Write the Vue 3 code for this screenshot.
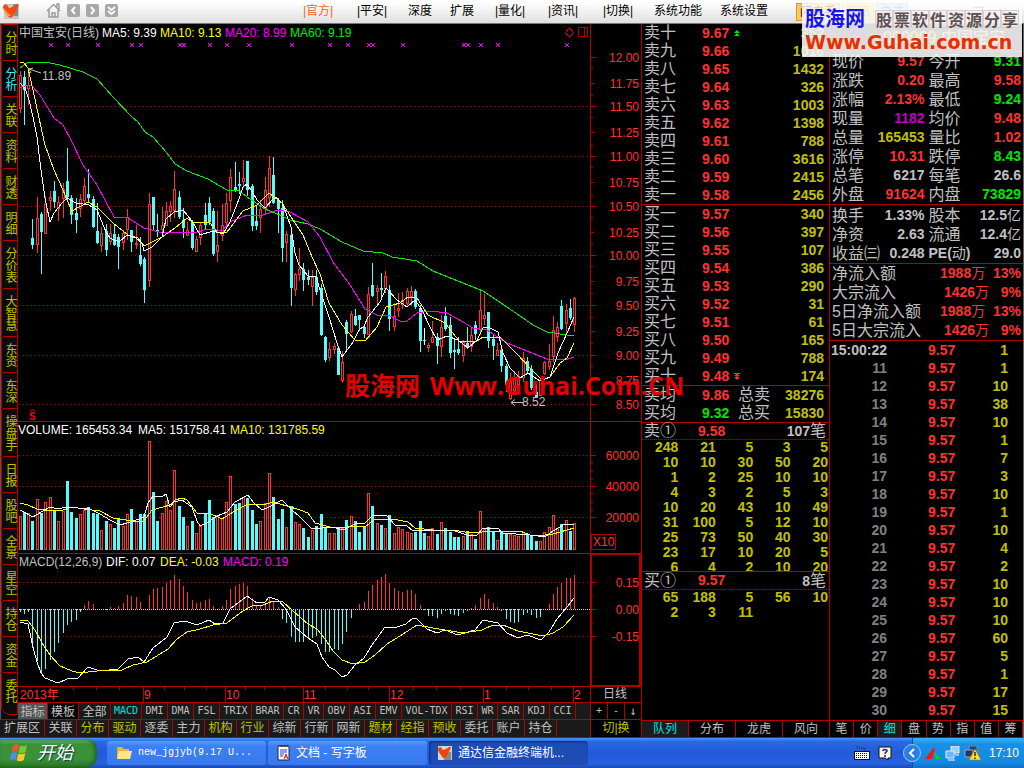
<script setup>
const menus = [
  { t: '|官方|', w: 54, hot: true },
  { t: '|平安|', w: 51 },
  { t: '深度', w: 42 },
  { t: '扩展', w: 45 },
  { t: '|量化|', w: 53 },
  { t: '|资讯|', w: 55 },
  { t: '|切换|', w: 51 },
  { t: '系统功能', w: 66 },
  { t: '系统设置', w: 76 },
]

const sideTabs = ['分时', '分析', '关联', '资料', '财透', '明细', '分价表', '大智慧', '东资', '东深', '操盘手', '日报', '股吧', '全景', '星空', '持仓', '资金', '委托']

// colour, high, low, body top, body bottom, volume top
const candleText = `r 71 113 75 108 516;c 71 125 77 90 512;r 70 105 85 88 513;c 219 249 238 245 521;r 197 253 218 244 499;c 212 274 214 232 513;r 196 233 204 233 502;r 191 211 197 200 497;c 181 208 191 202 511;r 196 221 202 208 521;
r 183 218 189 198 511;c 148 200 181 197 481;c 195 224 198 215 512;c 198 233 213 220 518;r 194 217 199 208 514;r 178 204 186 200 510;c 169 203 194 198 507;c 196 228 199 227 513;c 203 244 231 243 514;r 227 252 233 245 530;
c 224 256 231 250 521;r 224 245 233 241 524;c 225 246 234 245 528;c 234 269 237 247 519;r 230 250 233 242 526;r 209 240 217 229 514;c 230 252 230 242 509;r 225 249 243 244 521;c 237 266 255 264 514;c 257 303 259 290 514;
r 193 287 204 280 441;c 197 230 197 225 492;c 214 237 230 232 521;r 207 236 225 229 513;r 202 226 211 225 501;r 201 222 206 211 510;r 171 218 189 210 470;c 191 219 197 217 506;c 208 238 220 228 517;r 222 235 230 235 526;
c 220 250 222 248 521;r 236 251 239 251 533;r 222 245 225 237 526;c 203 230 215 225 514;c 197 225 203 222 500;c 208 256 211 254 517;r 211 262 245 251 515;r 204 241 225 235 518;r 193 225 203 222 502;r 169 212 177 200 476;
c 162 192 187 190 504;c 172 194 184 186 503;r 160 188 178 181 497;c 161 196 161 190 498;c 184 231 186 226 510;c 206 230 221 226 524;r 200 233 209 217 521;r 177 215 190 208 503;r 156 207 168 197 473;c 157 204 175 203 497;
c 198 233 200 209 519;c 200 262 208 248 509;r 231 262 234 242 527;c 229 306 235 288 506;r 273 296 274 289 522;r 248 281 269 274 524;c 263 291 269 280 528;c 270 285 277 280 537;r 270 306 277 286 530;c 270 295 277 292 526;
c 284 336 288 335 514;c 336 362 337 360 527;r 342 361 349 357 533;r 343 354 346 349 533;c 346 375 348 375 528;r 351 383 362 380 528;c 320 351 322 334 520;r 311 333 314 331 516;c 309 326 316 325 521;c 315 331 315 320 532;
c 324 338 327 334 527;r 287 335 294 334 493;c 263 297 285 296 506;r 285 306 288 291 523;c 273 298 288 290 525;r 271 293 276 288 528;c 285 331 290 319 515;r 303 331 316 326 533;r 293 317 308 310 527;r 292 309 300 304 529;
r 288 306 291 303 532;r 286 306 291 296 533;c 289 309 291 307 532;c 305 352 308 341 521;w 328 345 340 341 533;r 343 352 345 347 536;r 321 343 337 342 528;c 333 364 337 346 534;r 315 357 327 346 522;c 307 331 316 329 528;
c 317 358 325 353 532;c 338 369 350 352 537;c 337 355 349 353 537;r 340 362 342 355 536;c 327 349 343 348 531;r 328 352 335 346 534;c 321 340 325 334 539;r 291 335 310 329 511;r 294 325 315 318 529;c 312 348 312 341 527;
c 335 360 339 346 531;r 343 355 350 355 540;c 345 372 350 366 532;c 364 392 366 385 533;r 373 400 380 398 534;r 371 392 378 390 535;r 371 386 376 384 536;r 352 382 358 377 532;c 357 373 361 371 534;c 365 390 369 388 535;
c 385 397 392 397 541;r 378 396 380 395 541;r 361 375 362 373 532;r 344 370 361 366 527;r 316 362 330 356 515;r 322 342 327 336 528;c 300 330 306 329 524;r 304 333 310 323 520;c 299 320 308 318 531;r 297 332 298 324 523`

const candles = candleText.split(';').map((row, i) => {
  const [k, ...n] = row.trim().split(' ')
  const [hi, lo, top, bot, vol] = n.map(Number)
  return { k, hi, lo, top, bot, vol, x: 20 + Math.floor(4.3 * i + 0.1) }
})

const macd = [-3, -5, -3, -39, -52, -64, -60, -51, -43, -34, -24, -16, -13, -11, -3, 4, 8, 5, 0, 0, -1, 2, 1, 3, 6, 14, 13, 12, 7, 0, 14, 20, 21, 22, 26, 29, 34, 30, 23, 17, 9, 6, 7, 9, 10, 3, 0, 3, 9, 20, 23, 25, 26, 23, 11, 4, 3, 6, 12, 8, 2, -10, -14, -28, -33, -33, -33, -30, -29, -27, -35, -43, -43, -40, -41, -35, -23, -9, 0, 5, 7, 18, 24, 29, 32, 35, 26, 21, 18, 17, 19, 19, 15, 4, -1, -7, -7, -9, -5, -2, -5, -6, -7, -4, -2, 1, 4, 11, 15, 10, 6, 2, -2, -10, -13, -14, -13, -6, -4, -6, -9, -8, 0, 5, 15, 22, 26, 31, 31, 34]
  .map((v, i) => ({ v, x: 20 + Math.floor(4.3 * i + 0.1) }))

const lines = [
  { c: '#00f000', p: '20,68 27,63 45,62 60,65 83,72 97,79 113,97 132,117 138,122 145,132 153,137 167,153 175,164 187,171 208,179 227,190 239,191 250,199 265,209 280,215 290,220 308,224 320,229 342,242 363,251 383,253 392,257 417,261 433,271 453,279 483,291 507,307 533,325 547,332 567,335 574,336' },
  { c: '#f0f', p: '20,88 27,85 32,86 40,95 49,110 54,118 63,125 71,140 83,165 97,185 105,200 114,217 128,218 144,228 163,233 197,232 208,229 222,231 230,222 247,215 263,215 278,210 290,212 308,222 320,237 333,262 350,285 365,309 377,315 390,316 400,321 407,321 417,313 430,311 447,313 463,322 473,328 487,330 507,343 527,351 547,359 568,359 574,357' },
  { c: '#ff0', p: '20,62 23,62 28,68 33,90 41,127 45,145 54,170 63,190 67,200 72,211 88,202 97,207 113,223 128,235 138,238 144,246 162,237 175,228 187,218 192,222 210,223 218,233 227,232 243,211 257,205 269,193 278,200 282,203 293,220 303,235 312,257 320,274 329,303 342,325 355,340 365,341 377,327 386,307 400,303 408,297 417,298 428,315 445,323 460,342 477,341 483,337 500,337 517,354 530,368 542,380 550,377 560,363 567,358 574,343' },
  { c: '#fff', p: '20,83 25,88 29,100 33,117 37,137 41,170 45,198 50,222 54,213 62,203 67,198 76,203 89,205 97,210 106,232 110,238 119,242 127,235 136,238 142,243 144,251 152,247 162,237 166,219 174,212 183,210 192,221 200,235 213,231 223,234 230,222 239,199 243,187 247,184 253,193 257,200 265,208 273,199 276,197 282,203 286,213 291,227 295,253 299,265 308,276 316,277 321,293 329,317 337,343 342,357 353,342 359,330 364,326 368,317 380,302 386,288 397,300 407,307 415,300 422,310 430,327 437,340 447,336 458,340 468,348 477,340 483,328 488,327 498,332 503,353 510,368 520,378 528,373 540,381 550,377 558,353 567,333 574,317' },
  { c: '#ff0', p: '20,503 28,505 37,509 50,511 63,510 71,507 84,509 100,511 113,518 133,521 144,521 152,510 163,507 170,505 175,500 182,498 187,500 197,513 209,513 222,519 233,512 248,504 263,505 273,502 287,506 300,510 308,513 315,523 330,527 343,528 353,526 365,527 375,519 393,519 408,522 415,528 433,530 453,530 465,532 477,533 487,531 520,531 530,535 545,535 553,534 574,528' },
  { c: '#fff', p: '20,510 33,517 41,512 50,507 58,509 67,507 78,508 88,508 100,514 110,520 120,525 127,523 136,520 144,517 148,503 153,496 163,496 166,494 170,507 174,502 182,500 192,507 197,521 200,526 207,523 217,516 227,512 235,502 248,495 253,502 262,510 269,507 282,500 292,510 300,517 312,529 333,527 343,530 355,524 365,523 372,516 386,515 395,525 407,526 413,531 420,530 433,531 452,530 467,535 477,535 482,529 498,528 502,533 530,535 545,537 553,531 565,524 574,524' },
  { c: '#fff', p: '20,622 28,624 33,647 37,662 41,673 45,678 58,683 67,679 78,678 88,667 100,671 118,669 128,659 138,657 144,662 153,648 167,637 174,623 185,621 197,625 209,620 215,624 223,623 230,609 247,596 257,603 265,602 269,597 278,600 286,609 295,627 308,638 317,644 322,657 329,667 335,670 342,677 347,675 355,665 364,658 372,645 385,627 397,627 406,624 413,618 417,619 427,629 437,633 445,630 458,635 475,630 483,620 498,623 507,633 518,638 527,635 541,640 549,632 557,619 567,607 574,598' },
  { c: '#ff0', p: '20,620 28,621 35,630 42,643 50,655 60,666 72,671 80,673 97,671 122,670 133,665 147,662 160,654 168,649 177,639 187,632 200,629 213,625 227,623 243,611 252,606 263,605 273,601 283,602 293,611 308,624 317,629 325,639 333,651 342,660 353,664 365,662 375,655 387,644 400,636 417,625 433,628 463,633 482,630 493,625 503,625 518,631 543,636 553,633 563,627 574,615' },
]

const priceAxis = [[12, 57], [11.75, 83], [11.5, 106], [11.25, 132], [11, 156], [10.75, 182], [10.5, 206], [10.25, 232], [10, 255], [9.75, 281], [9.5, 305], [9.25, 331], [9, 355], [8.75, 380], [8.5, 404]]
  .map(([v, y]) => ({ t: v.toFixed(2), y, major: v % 0.5 === 0 }))
const otherAxis = [['60000', 455], ['40000', 486], ['20000', 517], ['0.15', 582], ['0.00', 609], ['-0.15', 636]]
const gridY = [106, 156, 206, 255, 305, 355, 404, 455, 486, 517, 582, 636]
const minorTicks = [68, 95, 117, 145, 167, 195, 217, 244, 266, 293, 317, 343, 366, 392, 462, 471, 479, 493, 502, 510, 596, 623]
const signals = [51, 68, 98, 132, 141, 180, 184, 210, 227, 249, 292, 330, 348, 369, 373, 403, 464, 468, 481, 498, 567]
const months = [['9', 143], ['10', 225], ['11', 303], ['12', 389], ['1', 483], ['2', 573]]
const weekTicks = [73, 96, 119, 164, 184, 206, 245, 264, 284, 325, 347, 368, 413, 436, 460, 506, 528, 551]

const indicators = [['指标', 30], ['模板', 31], ['全部', 32], ['MACD', 31], ['DMI', 26], ['DMA', 26], ['FSL', 26], ['TRIX', 32], ['BRAR', 32], ['CR', 20], ['VR', 20], ['OBV', 26], ['ASI', 26], ['EMV', 26], ['VOL-TDX', 50], ['RSI', 26], ['WR', 20], ['SAR', 26], ['KDJ', 26], ['CCI', 26]]
const links = ['扩展区', '关联', '分布', '驱动', '逐委', '主力', '机构', '行业', '综新', '行新', '网新', '题材', '经指', '预收', '委托', '账户', '持仓']
const yellowLinks = ['分布', '驱动', '机构', '行业', '题材', '经指', '预收']

const nums = ['十', '九', '八', '七', '六', '五', '四', '三', '二', '一']
const sells = [352, 1016, 1432, 326, 1003, 1398, 788, 3616, 2415, 2456].map((v, i) => ({ n: '卖' + nums[i], p: (9.67 - i * 0.01).toFixed(2), v }))
const buys = [340, 397, 107, 386, 290, 31, 61, 165, 788, 174].map((v, i) => ({ n: '买' + nums[9 - i], p: (9.57 - i * 0.01).toFixed(2), v }))
const sellQueue = [[248, 21, 5, 3, 5], [10, 10, 30, 50, 20], [1, 2, 25, 10, 10], [4, 3, 2, 5, 3], [10, 20, 43, 10, 49], [31, 100, 5, 12, 10], [25, 73, 50, 40, 30], [23, 17, 10, 20, 5], [6, 4, 2, 10, 20]]
const buyQueue = [[65, 188, 5, 56, 10], [2, 3, 11, '', '']]

const quotes = [
  ['现价', '9.57', 'red', '今开', '9.31', 'green'],
  ['涨跌', '0.20', 'red', '最高', '9.58', 'red'],
  ['涨幅', '2.13%', 'red', '最低', '9.24', 'green'],
  ['现量', '1182', 'purple', '均价', '9.48', 'red'],
  ['总量', '165453', 'yellow', '量比', '1.02', 'red'],
  ['涨停', '10.31', 'red', '跌停', '8.43', 'green'],
  ['总笔', '6217', 'grey', '每笔', '26.6', 'grey'],
  ['外盘', '91624', 'red', '内盘', '73829', 'green'],
]
const basics = [
  ['换手', '1.33%', '股本', '12.5', '亿'],
  ['净资', '2.63', '流通', '12.4', '亿'],
  ['收益㈢', '0.248', 'PE(动)', '29.0', ''],
]
const flows = [['净流入额', '1988', '  13%'], ['大宗流入', '1426', '   9%'], ['5日净流入额', '1988', '  13%'], ['5日大宗流入', '1426', '   9%']]
const ticks = [1, 1, 10, 38, 10, 1, 7, 3, 10, 1, 10, 4, 2, 10, 10, 10, 60, 5, 1, 17, 15].map((v, i) => ({ t: i ? String(10 + i) : '15:00:22', v }))
const midTabs = ['队列', '分布', '龙虎', '风向']
const rightTabs = ['笔', '价', '细', '盘', '势', '指', '值', '筹']
</script>

<template>
  <div class="terminal">
    <header class="topbar">
      <svg class="logo" width="17" height="17" viewBox="0 0 17 17">
        <rect x="1" y="1" width="15" height="15" fill="#c9c4c0" />
        <path d="M10 1h5v12h-4z" fill="#8b8783" />
        <path d="M0 4C0 2 2 1 4 2c1 1 1 2 2 3 2 0 5-2 8-4 2 0 2 1 1 3-2 3-3 6-5 9-1 2-4 2-5 0C3 10 0 7 0 4z" fill="#f04a10" />
        <path d="M1 5c2 3 4 6 7 7-2 2-3 1-4-1C2 9 1 7 1 5z" fill="#ffa52c" />
      </svg>
      <div class="navicons">
        <button aria-label="主页"><svg width="15" height="15" viewBox="0 0 15 15"><path d="M1 8l6.500-6.500L14 8M3 7v7h9V7M11 4V1h2v5M6 14v-4h3v4" fill="none" stroke="#999" stroke-width="1.400" /></svg></button>
        <button aria-label="后退"><svg width="13" height="13" viewBox="0 0 13 13"><rect width="13" height="13" rx="2" fill="#a8a8a8" /><path d="M8 3L5 6.500 8 10" fill="none" stroke="#fff" stroke-width="2" /></svg></button>
        <button aria-label="前进"><svg width="13" height="13" viewBox="0 0 13 13"><rect width="13" height="13" rx="2" fill="#a8a8a8" /><path d="M5 3l3 3.500L5 10" fill="none" stroke="#fff" stroke-width="2" /></svg></button>
        <button aria-label="更多"><svg width="13" height="13" viewBox="0 0 13 13"><rect width="13" height="13" rx="2" fill="#a8a8a8" /><path d="M3 3l3.500 3L10 3M3 7l3.500 3L10 7" fill="none" stroke="#fff" stroke-width="1.800" /></svg></button>
      </div>
      <nav class="menus">
        <button v-for="m in menus" :key="m.t" :class="{ hot: m.hot }" :style="{ width: m.w + 'px' }">{{ m.t }}</button>
      </nav>
      <div class="quick">
        <button class="flash">闪电手</button>
        <button class="goods">商品</button>
        <button class="mine">自选</button>
      </div>
      <div class="winctl"><button>─</button><button>❐</button><button>✕</button></div>
    </header>

    <main class="body">
      <section class="left">
        <aside class="side">
          <button v-for="t in sideTabs" :key="t" :class="{ on: t === '分析' }">{{ t }}</button>
        </aside>

        <svg class="chart" viewBox="18 24 623 678">
          <g class="frame">
            <path d="M590.500 24V702M18 421.500H641M18 553.500H641M18 686.500H641" />
            <rect x="591" y="554" width="49" height="132" stroke-width="2" />
            <rect x="591.500" y="534.500" width="24" height="15" />
            <path v-for="a in priceAxis" :key="a.t" :d="`M591 ${a.y + 0.5}h${a.major ? 5 : 3}`" />
            <path v-for="a in otherAxis" :key="a[0]" :d="`M591 ${a[1] + 0.5}h5`" />
            <path v-for="y in minorTicks" :key="y" :d="`M591 ${y + 0.5}h2`" />
            <path v-for="m in months" :key="m[0]" :d="`M${m[1] + 0.5} 686V702`" />
            <path v-for="x in weekTicks" :key="x" :d="`M${x + 0.5} 687v3`" />
            <path d="M569.500 27.500l4 5-4 5-4-5z" />
            <path d="M578.500 27.500h9v9h-9zM584.500 27.500v9" />
          </g>
          <path v-for="y in gridY" :key="y" class="dots" :d="`M19 ${y + 0.5}H589`" />
          <path class="zero" d="M19 609.500H590" />

          <g class="bars">
            <g v-for="c in candles" :key="c.x" :class="c.k">
              <template v-if="c.k === 'r'">
                <path :d="`M${c.x + 0.5} ${c.hi}V${c.top}M${c.x + 0.5} ${c.bot}V${c.lo}`" />
                <rect :x="c.x - 0.5" :y="c.top + 0.5" width="2" :height="Math.max(1, c.bot - c.top)" />
                <rect :x="c.x - 0.5" :y="c.vol + 0.5" width="2" :height="549 - c.vol" />
              </template>
              <template v-else>
                <path :d="`M${c.x + 0.5} ${c.hi}V${c.lo}`" />
                <rect class="solid" :x="c.x - 1" :y="c.top" width="3" :height="Math.max(1, c.bot - c.top)" />
                <rect class="solid" :x="c.x - 1" :y="c.vol" width="3" :height="550 - c.vol" />
              </template>
            </g>
            <path v-for="m in macd" :key="m.x" :class="m.v > 0 ? 'r' : 'c'" :d="`M${m.x + 0.5} 609V${609 - m.v}`" />
          </g>
          <polyline v-for="(l, i) in lines" :key="i" class="ma" :points="l.p" :stroke="l.c" />
          <path v-for="x in signals" :key="x" class="signal" :d="`M${x - 2} 43l4 4M${x + 2} 43l-4 4`" />
          <path class="pointer" d="M41 73l-12-4m4-1l-4 1 2 4M524 402.500h-13m4-3l-4 3 4 3" />

          <g class="legend">
            <text x="19" y="37" fill="#c0c0c0">中国宝安(日线)</text>
            <text x="102" y="37" fill="#fff">MA5: 9.39</text>
            <text x="160" y="37" fill="#ff0">MA10: 9.13</text>
            <text x="225" y="37" fill="#f0f">MA20: 8.99</text>
            <text x="290" y="37" fill="#00f000">MA60: 9.19</text>
            <text x="42" y="80" fill="#c0c0c0">11.89</text>
            <text x="522" y="406" fill="#c0c0c0">8.52</text>
            <text x="18" y="434" fill="#fff">VOLUME: 165453.34</text>
            <text x="138" y="434" fill="#fff">MA5: 151758.41</text>
            <text x="230" y="434" fill="#ff0">MA10: 131785.59</text>
            <text x="19" y="566" fill="#c0c0c0">MACD(12,26,9)</text>
            <text x="106" y="566" fill="#fff">DIF: 0.07</text>
            <text x="160" y="566" fill="#ff0">DEA: -0.03</text>
            <text x="223" y="566" fill="#f0f">MACD: 0.19</text>
            <text x="603" y="698" fill="#c0c0c0">日线</text>
          </g>
          <g class="axis">
            <text v-for="a in priceAxis" :key="a.t" x="639" :y="a.y + 5" text-anchor="end">{{ a.t }}</text>
            <text v-for="a in otherAxis" :key="a[0]" x="639" :y="a[1] + 5" text-anchor="end">{{ a[0] }}</text>
            <text x="593" y="546">X10</text>
            <text x="20" y="699">2013年</text>
            <text v-for="m in months" :key="m[0]" :x="m[1] + 1" y="699">{{ m[0] }}</text>
          </g>
          <text class="mark" x="29" y="420">S</text>
          <path d="M30 411.500l2.500-2 2.500 2" stroke="#f00" fill="none" />
        </svg>

        <div class="indicators">
          <button v-for="(n, i) in indicators" :key="n[0]" :class="['i' + i, { cn: i < 3 }]" :style="{ width: n[1] + 'px' }">{{ n[0] }}</button>
          <span class="fill"></span>
          <div class="zoomers"><button>+</button><button>-</button><button>↓</button></div>
        </div>
        <div class="links">
          <button v-for="(n, i) in links" :key="n" :class="{ wide: i === 0, yellow: yellowLinks.includes(n) }">{{ n }}</button>
          <span class="fill"></span>
          <button class="switch yellow">切|换</button>
        </div>
        <div class="mark-center"><span>股海网</span><span>Www.Guhai.Com.CN</span></div>
      </section>

      <section class="mid">
        <table class="book">
          <colgroup><col class="c1" /><col class="c2" /><col class="c3" /><col /></colgroup>
          <tbody>
            <tr v-for="(s, i) in sells" :key="s.n">
              <th>{{ s.n }}</th><td class="red">{{ s.p }}</td>
              <td><svg v-if="i === 0" width="6" height="7" viewBox="0 0 6 7"><path d="M3 0l3 3H0zM3 3l3 3H0z" fill="#00e600" /></svg></td>
              <td class="yellow num">{{ s.v }}</td>
            </tr>
          </tbody>
        </table>
        <table class="book">
          <colgroup><col class="c1" /><col class="c2" /><col class="c3" /><col /></colgroup>
          <tbody>
            <tr v-for="(s, i) in buys" :key="s.n">
              <th>{{ s.n }}</th><td class="red">{{ s.p }}</td>
              <td><svg v-if="i === 9" width="6" height="7" viewBox="0 0 6 7"><path d="M0 0h6v1H0zM2 1h2v1h2L3 4 0 2h2zM2 4h4L3 7 0 4z" fill="#ff3232" /></svg></td>
              <td class="yellow num">{{ s.v }}</td>
            </tr>
          </tbody>
        </table>
        <table class="book">
          <colgroup><col class="c1" /><col class="c2" /><col class="c4" /><col /></colgroup>
          <tbody>
            <tr><th>卖均</th><td class="red">9.86</td><th class="sum">总卖</th><td class="yellow num">38276</td></tr>
            <tr><th>买均</th><td class="green">9.32</td><th class="sum">总买</th><td class="yellow num">15830</td></tr>
          </tbody>
        </table>
        <div class="qhead first"><span class="lab">卖①</span><b class="red">9.58</b><span class="cnt"><b>107</b>笔</span></div>
        <div class="qclip">
          <table class="queue"><tbody><tr v-for="(r, i) in sellQueue" :key="i"><td v-for="(v, j) in r" :key="j">{{ v }}</td></tr></tbody></table>
        </div>
        <div class="qhead"><span class="lab">买①</span><b class="red">9.57</b><span class="cnt"><b>8</b>笔</span></div>
        <div class="qrest">
          <table class="queue"><tbody><tr v-for="(r, i) in buyQueue" :key="i"><td v-for="(v, j) in r" :key="j">{{ v }}</td></tr></tbody></table>
        </div>
        <nav class="tabs"><button v-for="t in midTabs" :key="t" :class="{ on: t === '队列' }">{{ t }}</button></nav>
      </section>

      <section class="right">
        <h1 class="stock"><small>R</small> 000009 中国宝安</h1>
        <table class="quote">
          <colgroup><col class="q1" /><col class="q2" /><col class="q1" /><col class="q2" /></colgroup>
          <tbody>
            <tr v-for="q in quotes" :key="q[0]">
              <th>{{ q[0] }}</th><td :class="q[2]">{{ q[1] }}</td><th>{{ q[3] }}</th><td :class="q[5]">{{ q[4] }}</td>
            </tr>
          </tbody>
        </table>
        <table class="quote basics">
          <colgroup><col class="q1" /><col class="q2" /><col class="q1" /><col class="q2" /></colgroup>
          <tbody>
            <tr v-for="q in basics" :key="q[0]">
              <th>{{ q[0] }}</th><td>{{ q[1] }}</td>
              <th v-if="q[4]">{{ q[2] }}</th><th v-else class="pe"><b>PE(</b>动<b>)</b></th>
              <td>{{ q[3] }}<span class="unit">{{ q[4] }}</span></td>
            </tr>
          </tbody>
        </table>
        <table class="quote flows">
          <tbody><tr v-for="f in flows" :key="f[0]"><th>{{ f[0] }}</th><td class="red">{{ f[1] }}<span class="unit">万</span>{{ f[2] }}</td></tr></tbody>
        </table>
        <table class="ticks">
          <colgroup><col class="t1" /><col class="t2" /><col /></colgroup>
          <tbody>
            <tr v-for="(t, i) in ticks" :key="t.t"><td :class="['time', { now: i === 0 }]">{{ t.t }}</td><td class="red price">9.57</td><td class="yellow vol">{{ t.v }}</td></tr>
          </tbody>
        </table>
        <nav class="tabs"><button v-for="t in rightTabs" :key="t" :class="{ on: t === '细' }">{{ t }}</button></nav>
      </section>
    </main>

    <footer class="taskbar">
      <button class="start">
        <svg width="21" height="20" viewBox="0 0 21 20">
          <path d="M4 3c2-2 4-2 6-1L8.500 9C6.500 8 4.500 8 2.500 9.500z" fill="#f0562c" />
          <path d="M11 2.500c2 1 4 1 7-.5l-1.500 7c-3 1.500-5 1.500-7 .5z" fill="#7cc832" />
          <path d="M2.200 10.500c2-1.500 4-1.500 6-.5L7 17c-2-1-4-1-6 .5z" fill="#4c8cf0" />
          <path d="M9.300 10.500c2 1 4 1 7-.5l-1.500 7c-3 1.500-5 1.500-7 .5z" fill="#fcc822" />
        </svg>
        <span>开始</span>
      </button>
      <div class="tasks">
        <button>
          <svg width="16" height="14" viewBox="0 0 16 14"><path d="M1 2l1-1h4l2 2h5v10H1z" fill="#e8b63c" /><path d="M1 13L3 5h13l-2 8z" fill="#ffe58a" /></svg>
          <span>new_jgjyb(9.17 U...</span>
        </button>
        <button>
          <svg width="13" height="16" viewBox="0 0 13 16"><path d="M1 1h11v14H1z" fill="#fff" stroke="#223" /><path d="M2 1v-1M4 2V0M6 2V0M8 2V0M10 2V0" stroke="#222" /><path d="M3 5h7M3 7h7M3 9h4M3 11h3" stroke="#2438c8" /><path d="M7 14l2-5 2 5M8 12h2" stroke="#e01010" fill="none" /></svg>
          <span>文档 - 写字板</span>
        </button>
        <button class="active">
          <svg width="14" height="14" viewBox="0 0 17 17"><rect width="17" height="17" fill="#d8d4d0" /><path d="M10 7h6v10h-9z" fill="#8b8783" /><path d="M0 4C0 2 2 1 4 2c1 1 1 2 2 3 2 0 5-2 8-4 2 0 2 1 1 3-2 3-3 6-5 9-1 2-4 2-5 0C3 10 0 7 0 4z" fill="#f0400c" /></svg>
          <span>通达信金融终端机...</span>
        </button>
      </div>
      <div class="lang">
        <svg width="16" height="14" viewBox="0 0 16 14"><path d="M3 0v2h8v3" fill="none" stroke="#123" stroke-dasharray="1 1" /><rect x=".5" y="5.500" width="15" height="8" fill="#fff" stroke="#111" /><path d="M2 7.500h12M2 9.500h12M2 11.500h12" stroke="#111" stroke-dasharray="1 1" /></svg>
        <svg width="14" height="15" viewBox="0 0 14 15"><path d="M1 1h12v11h-3v2l-3-2H1z" fill="#fffbd8" stroke="#111" /><path d="M5 5c0-2 4-2 4 0 0 1-2 1-2 3M7 9v2" fill="none" stroke="#1a2a9a" stroke-width="1.600" /></svg>
      </div>
      <div class="tray">
        <svg class="chev" width="18" height="18" viewBox="0 0 18 18"><circle cx="9" cy="9" r="8.500" fill="#2a80e0" stroke="#8cc8f8" /><path d="M11 5L7 9l4 4" fill="none" stroke="#fff" stroke-width="2" /></svg>
        <svg width="16" height="13" viewBox="0 0 16 13"><path d="M0 12L9 0l1 3-3 9z" fill="#f01818" /><path d="M9 5l7 7h-5z" fill="#10d030" /></svg>
        <svg width="15" height="15" viewBox="0 0 15 15"><path d="M6 0h8v7H6z" fill="#9cd0f8" stroke="#dfe8f0" /><path d="M1 5h8v7H1z" fill="#6cb4f4" stroke="#e4ecf4" /><path d="M3 14h7M10 9h4" stroke="#c8d0dc" stroke-width="1.500" /></svg>
        <svg width="17" height="15" viewBox="0 0 17 15"><path d="M5 0h8v7H5z" fill="#2c3c6c" stroke="#8090a8" /><path d="M1 4h8v7H1z" fill="#24346c" stroke="#a0a8b8" /><path d="M11 3l6 11H5z" fill="#ffe020" stroke="#a08000" stroke-width=".6" /><path d="M11 6v4M11 11.500v1.500" stroke="#222" stroke-width="1.400" /></svg>
        <time>17:10</time>
      </div>
    </footer>

    <div class="banner">
      <strong>股海网</strong>
      <span class="cells"><i v-for="c in '股票软件资源分享'" :key="c">{{ c }}</i></span>
      <em>Www.Guhai.com.cn</em>
    </div>
  </div>
</template>

<style>
body { background: #000; }
</style>

<style scoped>
.terminal {
  position: relative;
  display: flex;
  flex-direction: column;
  min-height: 100vh;
  font: 12px/14px "Liberation Sans", "Noto Sans CJK SC", sans-serif;
  color: #c0c0c0;
  background: #000;
}
.terminal *, .terminal { box-sizing: border-box; }
button { margin: 0; padding: 0; border: 0; background: none; color: inherit; font: inherit; white-space: nowrap; }
table { width: 100%; border-collapse: collapse; table-layout: fixed; }
td, th { padding: 0; vertical-align: middle; white-space: pre; }
td { font-size: 14px; font-weight: bold; }
th { font-size: 16px; font-weight: normal; text-align: left; }
.red { color: #ff3232; }
.green { color: #00e600; }
.yellow { color: #c0c000; }
.purple { color: #c000c0; }
.grey { color: #c0c0c0; }

.topbar { display: flex; align-items: center; height: 24px; color: #000; background: linear-gradient(#fff 10%, #e0e0e0); border-bottom: 1px solid #77776f; }
.logo { margin: 0 26px 0 3px; }
.navicons { display: flex; align-items: center; gap: 6px; width: 257px; padding-bottom: 2px; }
.navicons svg { display: block; }
.menus { display: flex; }
.menus button { text-align: left; line-height: 20px; padding-bottom: 2px; }
.menus .hot { color: #f06428; }
.quick { display: flex; gap: 2px; }
.quick button { height: 18px; padding: 0 3px; border: 1px solid #e09818; line-height: 14px; }
.quick .flash { background: #ffc860; }
.quick .goods { background: #ffe060; border-color: #e8d030; color: #a08000; }
.quick .mine { background: #b8e0ff; border-color: #80b8f0; color: #3060a0; }
.winctl { display: flex; gap: 14px; margin: 0 16px 0 auto; color: #667; }

.body { flex: 1; display: grid; grid-template-columns: minmax(0, 1fr) 188px 195px; }
.left { position: relative; display: grid; grid-template-columns: 18px minmax(0, 1fr); grid-template-rows: 1fr 17px 19px; }
.side { grid-row: 1 / 3; display: flex; flex-direction: column; border-left: 1px solid #555; background: #0c0c0c; }
.side button {
  flex: none; width: 17px; padding: 6px 1px 5px; border: 1px solid #b00000; border-width: 1px 1px 0 1px; border-top-left-radius: 3px;
  writing-mode: vertical-rl; line-height: 13px; color: #c0c000;
}
.side button:last-child { padding-bottom: 11px; border-bottom-width: 1px; border-bottom-left-radius: 9px; }
.side .on { color: #40f0f0; background: #000; }
.chart { display: block; width: 100%; height: auto; }
.frame { fill: none; stroke: #b00000; shape-rendering: crispEdges; }
.dots { stroke: #b00000; stroke-dasharray: 1 3; shape-rendering: crispEdges; }
.zero { stroke: #d8d8d8; stroke-dasharray: 1 1; shape-rendering: crispEdges; }
.bars { shape-rendering: crispEdges; fill: #000; }
.bars .r { stroke: #ff3232; }
.bars .c { stroke: #54fcfc; }
.bars .w { stroke: #fff; }
.bars .solid { fill: #54fcfc; stroke: none; }
.ma { fill: none; shape-rendering: crispEdges; }
.signal { stroke: #f0f; }
.pointer { stroke: #c0c0c0; fill: none; }
.axis { fill: #ff3232; }
.mark { fill: #f00; font-weight: bold; font-size: 10px; }

.indicators, .links { display: flex; border-top: 1px solid #b00000; }
.indicators button, .links button { border-right: 1px solid #b00000; background: #1a1a1a; line-height: 16px; text-align: center; flex: none; }
.indicators button { font-family: "DejaVu Sans Mono", monospace; font-size: 10px; }
.indicators .cn { font-family: "Noto Sans CJK SC", sans-serif; font-size: 12px; }
.indicators .i0 { background: #555; }
.indicators .i1 { background: #000; }
.indicators .i3 { color: #00e0e0; }
.fill { flex: 1; background: #1a1a1a; }
.zoomers { display: flex; width: 51px; border-left: 1px solid #b00000; }
.indicators .zoomers button { flex: 1; background: #000; }
.indicators .zoomers button:last-child { border-right: 0; font-size: 12px; }
.links { grid-column: 1 / 3; border-bottom: 1px solid #b00000; }
.links button { width: 32px; line-height: 17px; }
.links .wide { width: 45px; }
.links .switch { width: 51px; border: 0; border-left: 1px solid #b00000; background: #000; }
.mark-center {
  position: absolute; left: 345px; top: 344px; z-index: 2; display: flex; gap: 10px; white-space: nowrap; line-height: 34px;
  font-family: "Open Sans", "Noto Sans CJK SC", sans-serif; font-size: 25px; font-weight: bold; color: #e60000;
}

.mid, .right { display: flex; flex-direction: column; border-left: 1px solid #b00000; }
.book { border-bottom: 1px solid #b00000; }
.book tr { height: 18px; line-height: 18px; }
.book th { padding-left: 2px; }
.book .sum { padding-left: 4px; }
.c1 { width: 60px; }
.c2 { width: 32px; }
.c3 { width: 20px; }
.c4 { width: 40px; }
.num { text-align: right; padding-right: 5px; }
.book svg { display: block; }
.qhead { display: flex; height: 18px; line-height: 17px; padding: 0 3px 0 2px; font-size: 14px; border-bottom: 1px dotted #b00000; }
.qhead.first { height: 17px; line-height: 16px; }
.lab { width: 54px; font-size: 16px; }
.cnt { margin-left: auto; font-size: 16px; }
.cnt b { font-size: 14px; }
.qclip { height: 132px; overflow: hidden; border-bottom: 1px solid #b00000; }
.qrest { flex: 1; }
.queue tr { height: 15px; line-height: 15px; }
.queue td { text-align: right; color: #c0c000; padding-right: 1px; }
.tabs { display: flex; height: 18px; border: solid #b00000; border-width: 1px 0; }
.tabs button { flex: 1; line-height: 16px; border-right: 1px solid #b00000; }
.mid .tabs button:last-child { border-right: 0; }
.tabs .on { background: #1c1c1c; color: #00e0e0; }

.right { border-right: 1px solid #666; }
.stock { margin: 0; height: 28px; line-height: 27px; padding-left: 40px; font-size: 16px; color: #ffe000; white-space: nowrap; border-bottom: 1px solid #b00000; font-weight: normal; }
.stock small { font-size: 12px; color: #f00; font-weight: bold; }
.quote { border-bottom: 1px solid #b00000; }
.quote tr { height: 19px; line-height: 19px; }
.quote th { padding-left: 2px; }
.quote td { text-align: right; padding-right: 2px; }
.q1 { width: 45px; }
.q2 { width: 51px; }
.quote .pe { font-size: 14px; }
.unit { font-weight: normal; line-height: 14px; }
.basics { margin-top: 1px; }
.ticks { margin-bottom: auto; }
.ticks tr { height: 18px; line-height: 18px; }
.t1 { width: 57px; }
.t2 { width: 88px; }
.time { text-align: right; color: #808080; }
.now { color: #c0c0c0; }
.price { padding-left: 41px; }
.vol { text-align: right; padding-right: 15px; }

.taskbar { display: flex; align-items: center; height: 30px; color: #fff; background: linear-gradient(#4a94f4, #2a68e0 12%, #2259d8 50%, #2663e0 85%, #1c48b0); }
.start { display: flex; align-items: center; gap: 7px; width: 97px; height: 28px; padding-left: 9px; border-radius: 0 10px 10px 0; background: linear-gradient(#6cbc64, #3c9038 20%, #3a923a 70%, #2c7a2c); box-shadow: inset -2px 0 4px #1c601c; }
.start span { font-size: 18px; line-height: 24px; font-style: italic; text-shadow: 1px 1px 1px #134; }
.tasks { display: flex; flex: 1; gap: 2px; margin-left: 10px; }
.tasks button { display: flex; align-items: center; gap: 6px; flex: 0 1 159px; height: 24px; padding: 0 9px; border-radius: 3px; background: linear-gradient(#5a9cfc, #3c80f4 20%, #3878ee); font-size: 12px; overflow: hidden; }
.tasks button:first-child { font-family: "Liberation Mono", monospace; font-size: 10px; }
.tasks svg { flex: none; }
.tasks .active { background: #1c4cb4; box-shadow: inset 1px 1px 2px #103078; }
.lang { display: flex; gap: 8px; align-items: center; margin-right: 20px; }
.tray { display: flex; align-items: center; gap: 4px; width: 112px; height: 30px; border-left: 1px solid #1048a0; background: linear-gradient(#38b4f8, #1890e8 20%, #1488e0 80%, #1070c8); }
.tray svg { flex: none; }
.chev { margin-left: -10px; }
.tray time { margin-left: 4px; }

.banner {
  position: absolute; top: 3px; right: 2px; z-index: 3; width: 220px; height: 54px; padding: 4px 3px 0;
  display: flex; flex-wrap: wrap; justify-content: space-between; align-content: flex-start; background: linear-gradient(rgba(255, 255, 255, .8), rgba(245, 245, 245, .9) 40%);
}
.banner strong { font-size: 20px; line-height: 24px; color: #1414f0; }
.cells { display: flex; padding-top: 3px; }
.cells i { width: 18px; height: 18px; border: 1px solid #d8d0d0; font: bold 16px/16px "Noto Sans CJK SC", sans-serif; color: #5a5252; background: rgba(255, 230, 230, .5); }
.banner em { font: bold 19px/22px "DejaVu Sans", sans-serif; color: #e63000; }
</style>
